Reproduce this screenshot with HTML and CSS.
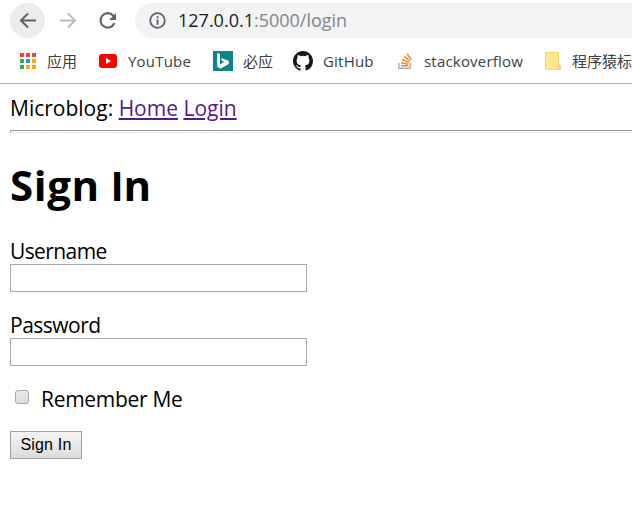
FILE: index.html
```html
<!DOCTYPE html>
<html lang="zh-CN">
<head>
<meta charset="utf-8">
<title>Sign In - Microblog</title>
<link rel="stylesheet" href="styles.css">
</head>
<body>
<header class="browser">
  <div class="toolbar">
    <span class="nav nav-back"><svg width="20" height="20" viewBox="0 0 20 20"><path d="M18 9.5H3M10 2.5L3 9.5L10 16.5" fill="none" stroke="#5f6368" stroke-width="2"/></svg></span>
    <span class="nav nav-forward"><svg width="20" height="20" viewBox="0 0 20 20"><path d="M2 9.5H17M10 2.5L17 9.5L10 16.5" fill="none" stroke="#b9bbbd" stroke-width="2"/></svg></span>
    <span class="nav nav-reload"><svg width="20" height="20" viewBox="0 0 20 20"><path d="M15.6 5.2A7.2 7.2 0 1 0 16.4 12" fill="none" stroke="#5f6368" stroke-width="2.1"/><path d="M18 2v7h-7z" fill="#5f6368"/></svg></span>
    <div class="address">
      <svg width="17" height="17" viewBox="0 0 17 17"><circle cx="8.5" cy="8.5" r="7.3" fill="none" stroke="#5f6368" stroke-width="1.8"/><path d="M8.5 4.2v2M8.5 7.5v5.2" stroke="#5f6368" stroke-width="1.9"/></svg>
      <span class="url"><span class="host">127.0.0.1</span><span class="path">:5000/login</span></span>
    </div>
  </div>
  <nav class="bookmarks">
    <span class="bookmark apps">
      <svg width="18" height="18" viewBox="0 0 18 18"><path d="M1 1h4v4H1zM7 1h4v4H7zM13 1h4v4h-4z" fill="#ea4335"/><path d="M1 7h4v4H1zM1 13h4v4H1z" fill="#34a853"/><path d="M7 7h4v4H7z" fill="#2196f3"/><path d="M13 7h4v4h-4zM7 13h4v4H7zM13 13h4v4h-4z" fill="#fbab08"/></svg>
      <span class="label">应用</span>
    </span>
    <span class="bookmark youtube">
      <svg width="18" height="14" viewBox="0 0 18 14"><rect width="18" height="14" rx="3" fill="#f00"/><path d="M7 4l5 3-5 3z" fill="#fff"/></svg>
      <span class="label">YouTube</span>
    </span>
    <span class="bookmark bing">
      <svg width="20" height="20" viewBox="0 0 20 20"><path d="M0 0h20v20H0z" fill="#0c8484"/><path d="M4.2 2l2.8 1v10.4l4.2-2.4-2-1-1.2-3 7.8 2.8v3.2L7.3 17.8l-3.1-2z" fill="#fff"/></svg>
      <span class="label">必应</span>
    </span>
    <span class="bookmark github">
      <svg width="20" height="20" viewBox="0 0 16 16"><path fill="#191717" d="M8 0C3.58 0 0 3.58 0 8c0 3.54 2.29 6.53 5.47 7.59.4.07.55-.17.55-.38 0-.19-.01-.82-.01-1.49-2.01.37-2.53-.49-2.69-.94-.09-.23-.48-.94-.82-1.13-.28-.15-.68-.52-.01-.53.63-.01 1.08.58 1.23.82.72 1.21 1.87.87 2.33.66.07-.52.28-.87.51-1.07-1.78-.2-3.64-.89-3.64-3.95 0-.87.31-1.59.82-2.15-.08-.2-.36-1.02.08-2.12 0 0 .67-.21 2.2.82a7.6 7.6 0 0 1 4 0c1.53-1.04 2.2-.82 2.2-.82.44 1.1.16 1.92.08 2.12.51.56.82 1.27.82 2.15 0 3.07-1.87 3.75-3.65 3.95.29.25.54.73.54 1.48 0 1.07-.01 1.93-.01 2.2 0 .21.15.46.55.38A8.01 8.01 0 0 0 16 8c0-4.42-3.58-8-8-8z"/></svg>
      <span class="label">GitHub</span>
    </span>
    <span class="bookmark stack">
      <svg width="14" height="16" viewBox="0 0 14 16"><path d="M.8 10v5.2h11.4V10" fill="none" stroke="#a9b0b5" stroke-width="1.5"/><path d="M3 12.8h7.4M3.1 9.7l7.3 1.5M4.2 6.5l6.8 3.1M6.3 3.4l5.7 4.8M9 .8l4.3 6" fill="none" stroke="#f48836" stroke-width="1.5"/></svg>
      <span class="label">stackoverflow</span>
    </span>
    <span class="bookmark folder">
      <svg width="16" height="18" viewBox="0 0 16 18"><path d="M.5.5h13v11.8l1.8.7v4.3H.5z" fill="#ffe692" stroke="#f5d663"/><path d="M13 17v-3.5q1-1.8 2 0V17z" fill="#ffe277" stroke="#edca4f" stroke-width=".7"/></svg>
      <span class="label">程序猿标</span>
    </span>
  </nav>
</header>
<main>
  <div class="site-nav">Microblog: <a href="#">Home</a> <a href="#">Login</a></div>
  <hr>
  <h1>Sign <span class="plain-cap">I</span>n</h1>
  <form>
    <div class="field"><label class="username" for="username">Username</label><input class="text" id="username" type="text"></div>
    <div class="field"><label class="password" for="password">Password</label><input class="text" id="password" type="password"></div>
    <div class="remember"><input class="check" id="remember" type="checkbox"><label for="remember">Remember Me</label></div>
    <button type="button">Sign In</button>
  </form>
</main>
</body>
</html>
```
FILE: styles.css
```css
* { box-sizing: border-box; }
body {
  margin: 0;
  overflow: hidden;
  background: #fff;
  color: #000;
  font-family: "Open Sans", "Noto Sans CJK SC", sans-serif;
}
svg { display: block; flex: none; }
.browser { height: 84px; border-bottom: 1px solid #b0b0b0; }
.toolbar { display: flex; padding: 3px 0 0 10px; height: 38px; }
.nav {
  display: flex;
  align-items: center;
  justify-content: center;
  width: 35px;
  height: 35px;
  margin-right: 5px;
  border-radius: 50%;
}
.nav-back { background: #ececec; }
.address {
  display: flex;
  align-items: center;
  flex: 1;
  height: 35px;
  margin-left: 5px;
  padding-left: 14px;
  border-radius: 18px 0 0 18px;
  background: #f1f3f4;
}
.url { margin-left: 12px; font-size: 18px; line-height: 35px; white-space: nowrap; }
.host { color: #202124; }
.path { color: #80868b; }
.bookmarks { display: flex; height: 45px; white-space: nowrap; }
.bookmark { display: flex; align-items: center; flex: none; height: 46px; color: #3c4043; font-size: 15px; }
.bookmark .label { margin-left: 10px; line-height: 46px; }
.apps { width: 80px; padding-left: 19px; }
.youtube { width: 114px; padding-left: 19px; }
.youtube .label { margin-left: 11px; letter-spacing: 0.2px; }
.bing { width: 80px; padding-left: 19px; }
.github { width: 106px; padding-left: 19px; }
.github .label { letter-spacing: 0.2px; }
.stack { width: 146px; padding-left: 18px; }
.stack .label { margin-left: 12px; letter-spacing: 0.2px; }
.folder { padding-left: 19px; }
.folder .label { margin-left: 11px; }
main { padding: 9px 0 0 10px; font-size: 21px; line-height: 30px; }
a { color: #551a8b; text-decoration-thickness: 2px; text-underline-offset: 2px; }
.site-nav { height: 30px; white-space: nowrap; }
hr { height: 3px; margin: 7px 0 0; border: 1px solid #ededed; border-top-color: #999; border-left-color: #999; border-right: 0; }
h1 { height: 58px; margin: 23px 0 0; font-size: 42px; font-weight: 700; line-height: 58px; letter-spacing: 0.6px; }
.plain-cap { font-family: "Liberation Sans", Arial, sans-serif; line-height: 1; }
form { padding-top: 22px; }
.field { height: 74px; }
.field label { display: block; height: 28px; line-height: 31px; }
.username { letter-spacing: -0.6px; }
.password { letter-spacing: -0.5px; }
.text { display: block; width: 297px; height: 28px; border: 1px solid #a9a9a9; background: #fff; }
.remember { display: flex; align-items: center; height: 29px; letter-spacing: -0.3px; }
.check {
  appearance: none;
  width: 14px;
  height: 14px;
  margin: -4px 12px 0 5px;
  border: 1px solid #aaa;
  border-radius: 3px;
  background: linear-gradient(#e8e8e8, #dcdcdc);
}
button {
  display: block;
  width: 72px;
  height: 28px;
  margin-top: 18px;
  padding: 0;
  border: 1px solid #a0a0a0;
  background: linear-gradient(#f5f5f5, #dcdcdc);
  color: #000;
  font: 16px/24px "Liberation Sans", Arial, sans-serif;
  letter-spacing: 0.2px;
}
```
